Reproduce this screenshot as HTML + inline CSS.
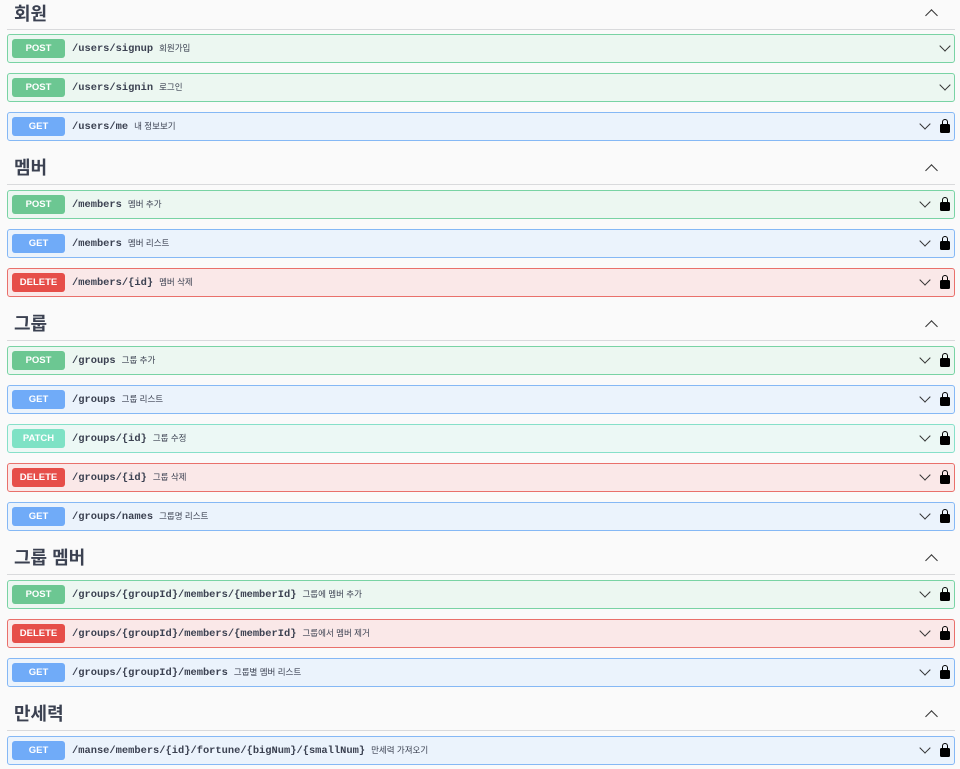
<!DOCTYPE html>
<html><head><meta charset="utf-8"><style>
body{margin:0;width:960px;height:769px;background:#fafafa;font-family:"Liberation Sans","Noto Sans CJK KR",sans-serif;position:relative;overflow:hidden;color:#3b4151}
.h{position:absolute;left:14px;font-size:18px;font-weight:bold;color:#3b4151;line-height:20px}
.hl{position:absolute;left:7px;width:948px;height:1px;background:#d9dadc}
.up{position:absolute;left:927px;width:8px;height:8px;border-left:1.5px solid #333;border-top:1.5px solid #333;transform:rotate(45deg)}
.r{position:absolute;left:7px;width:946px;height:27px;border:1px solid;border-radius:3px}
.b{position:absolute;left:4px;top:4px;width:53px;height:19px;border-radius:3px;color:#fff;font-size:9.5px;font-weight:bold;text-align:center;line-height:19px}
.p{position:absolute;left:64px;top:0;line-height:27px;font-family:"Liberation Mono",monospace;font-weight:bold;font-size:10.4px;color:#3b4151;white-space:nowrap}
.p span{font-family:"Liberation Sans","Noto Sans CJK KR",sans-serif;font-weight:normal;font-size:8.5px;margin-left:6px}
.c{position:absolute;left:913px;top:7px;width:7px;height:7px;border-right:1.5px solid #333;border-bottom:1.5px solid #333;transform:rotate(45deg)}
.c.nl{left:933px}
.l{position:absolute;left:932px;top:11px;width:10px;height:9px;background:#000;border-radius:1.5px}
.l:before{content:"";position:absolute;left:1.5px;top:-5px;width:4.5px;height:5px;border:1.5px solid #000;border-bottom:none;border-radius:3px 3px 0 0}
.po{background:#ecf7f1;border-color:#79d3a4}.po .b{background:#6cc792}
.ge{background:#ebf3fc;border-color:#85b8f5}.ge .b{background:#70abf8}
.de{background:#fae8e8;border-color:#e9706b}.de .b{background:#e64e49}
.pa{background:#ecf8f5;border-color:#86e0c9}.pa .b{background:#7ee2c5}
</style></head><body>
<div class="h" style="top:4px">회원</div><div class="hl" style="top:29px"></div><div class="up" style="top:11px"></div>
<div class="r po" style="top:34px"><div class="b">POST</div><div class="p">/users/signup<span>회원가입</span></div><div class="c nl"></div></div>
<div class="r po" style="top:73px"><div class="b">POST</div><div class="p">/users/signin<span>로그인</span></div><div class="c nl"></div></div>
<div class="r ge" style="top:112px"><div class="b">GET</div><div class="p">/users/me<span>내 정보보기</span></div><div class="c"></div><div class="l"></div></div>

<div class="h" style="top:158px">멤버</div><div class="hl" style="top:184px"></div><div class="up" style="top:166px"></div>
<div class="r po" style="top:190px"><div class="b">POST</div><div class="p">/members<span>멤버 추가</span></div><div class="c"></div><div class="l"></div></div>
<div class="r ge" style="top:229px"><div class="b">GET</div><div class="p">/members<span>멤버 리스트</span></div><div class="c"></div><div class="l"></div></div>
<div class="r de" style="top:268px"><div class="b">DELETE</div><div class="p">/members/{id}<span>멤버 삭제</span></div><div class="c"></div><div class="l"></div></div>

<div class="h" style="top:314px">그룹</div><div class="hl" style="top:340px"></div><div class="up" style="top:322px"></div>
<div class="r po" style="top:346px"><div class="b">POST</div><div class="p">/groups<span>그룹 추가</span></div><div class="c"></div><div class="l"></div></div>
<div class="r ge" style="top:385px"><div class="b">GET</div><div class="p">/groups<span>그룹 리스트</span></div><div class="c"></div><div class="l"></div></div>
<div class="r pa" style="top:424px"><div class="b">PATCH</div><div class="p">/groups/{id}<span>그룹 수정</span></div><div class="c"></div><div class="l"></div></div>
<div class="r de" style="top:463px"><div class="b">DELETE</div><div class="p">/groups/{id}<span>그룹 삭제</span></div><div class="c"></div><div class="l"></div></div>
<div class="r ge" style="top:502px"><div class="b">GET</div><div class="p">/groups/names<span>그룹명 리스트</span></div><div class="c"></div><div class="l"></div></div>

<div class="h" style="top:548px">그룹 멤버</div><div class="hl" style="top:574px"></div><div class="up" style="top:556px"></div>
<div class="r po" style="top:580px"><div class="b">POST</div><div class="p">/groups/{groupId}/members/{memberId}<span>그룹에 멤버 추가</span></div><div class="c"></div><div class="l"></div></div>
<div class="r de" style="top:619px"><div class="b">DELETE</div><div class="p">/groups/{groupId}/members/{memberId}<span>그룹에서 멤버 제거</span></div><div class="c"></div><div class="l"></div></div>
<div class="r ge" style="top:658px"><div class="b">GET</div><div class="p">/groups/{groupId}/members<span>그룹별 멤버 리스트</span></div><div class="c"></div><div class="l"></div></div>

<div class="h" style="top:704px">만세력</div><div class="hl" style="top:730px"></div><div class="up" style="top:712px"></div>
<div class="r ge" style="top:736px"><div class="b">GET</div><div class="p">/manse/members/{id}/fortune/{bigNum}/{smallNum}<span>만세력 가져오기</span></div><div class="c"></div><div class="l"></div></div>
</body></html>
